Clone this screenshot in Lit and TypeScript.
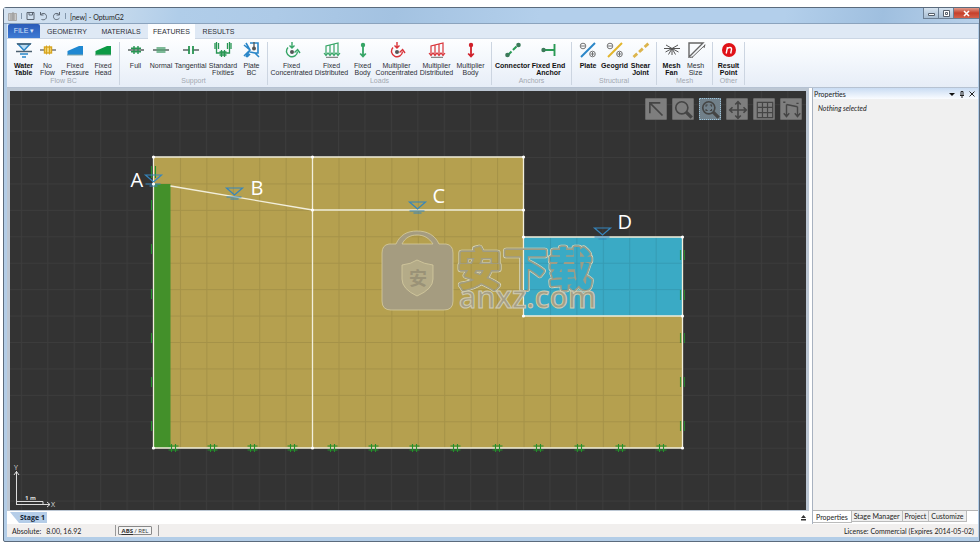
import { LitElement, html, svg, css, type TemplateResult, type SVGTemplateResult } from "lit";
import { customElement, property, state } from "lit/decorators.js";
import { classMap } from "lit/directives/class-map.js";
import { styleMap } from "lit/directives/style-map.js";

type Art = SVGTemplateResult;

/* Ribbon icons, drawn on a 20 x 16 grid */
const fixity = (inner: Art) => svg`<path d="M2 8H18" stroke="#4d5a55" stroke-width="1.4"/>${inner}`;
const concentrated = (c: string) => svg`
  <g fill="none" stroke=${c} stroke-width="1.4">
    <path d="M10 0V6M7.5 3.5L10 6L12.5 3.5"/>
    <path d="M6 5.5A5.5 5.5 0 1 0 15.5 9.5"/><path d="M12.5 10.5L15.6 7.5L18 11"/>
  </g><circle cx="10" cy="10" r="2" fill="#555"/>`;
const distributed = (c: string) => svg`
  <g fill="none" stroke=${c} stroke-width="1.2">
    <path d="M4 13V4L16 1V13M8 3V13M12 2V13"/>
    <path d="M2 11L4 13.5L6 11L8 13.5L10 11L12 13.5L14 11L16 13.5L18 11"/>
  </g><path d="M4 15.4H16" stroke="#888" stroke-width="1.3"/>`;
const body = (c: string) => svg`
  <circle cx="10" cy="3" r="2.2" fill=${c}/>
  <path d="M10 3V14M7.2 11.5L10 14.5L12.8 11.5" fill="none" stroke=${c} stroke-width="1.8"/>`;
const plate = (c: string) => svg`
  <path d="M3 15L17 1" stroke=${c} stroke-width="2"/>
  <g fill="none" stroke="#666" stroke-width=".9"><circle cx="5" cy="4" r="2.8"/><path d="M3 4H7"/>
  <circle cx="14.5" cy="12" r="2.8"/><path d="M12.5 12H16.5M14.5 10V14"/></g>`;

const icons: Record<string, Art> = {
  water: svg`<g fill="none" stroke="#2a86c8" stroke-width="1.5"><path d="M4 2H16L10 8.5Z" fill="#bcdcf2"/><path d="M6 12H14M8 15H12"/></g>
    <path d="M3 2H17M2 9.5H18" stroke="#4b6070" stroke-width="1.3"/>`,
  noflow: svg`<path d="M2 8H18" stroke="#777" stroke-width="1.5"/><rect x="6.5" y="5" width="7" height="6" fill="#f3d878" stroke="#d8a520" stroke-width="1.4"/>
    <path d="M8.5 3.5V12.5M11.5 3.5V12.5" stroke="#d8a520"/>`,
  pressure: svg`<path d="M2.5 13V9L14 4H18V13Z" fill="#1f88d2"/><path d="M2 13H18" stroke="#8aa"/>`,
  head: svg`<path d="M2.5 13V9L14 4H18V13Z" fill="#0c9a45"/><path d="M2 13H18" stroke="#8a9"/>`,
  full: fixity(svg`<path d="M8 4V12M12 4V12M5 6.2H15M5 9.8H15" stroke="#289653" stroke-width="1.4"/>`),
  normal: fixity(svg`<path d="M5.5 6H14.5M5.5 8H14.5M5.5 10H14.5" stroke="#55a577" stroke-width="1.6"/>`),
  tangential: fixity(svg`<path d="M8.5 8H11.5" stroke="#f5f9fd" stroke-width="2"/><path d="M8 4V12M12 4V12" stroke="#289653" stroke-width="1.8"/>`),
  standard: svg`<g fill="none" stroke="#289653" stroke-width="1.3"><path d="M3.5 0V11H16.5V0"/><path d="M2 1V7M5.5 1V7M14.5 1V7M18 1V7"/>
    <path d="M8.5 8V15M11.5 8V15M6.5 10H13.5M6.5 13H13.5"/></g>`,
  platebc: svg`<g fill="none" stroke="#2a86c8" stroke-width="1.6"><path d="M4 1L8 8L4 15M2 3L8 8M2 14L8 8M8 10L13 11L17 15M8 12L5 15M8 1H16V11H12"/></g>
    <path d="M12 0V7" stroke="#555" stroke-width="1.3"/><circle cx="12" cy="6.5" r="2" fill="#555"/>`,
  fconc: concentrated("#36a566"), fdist: distributed("#36a566"), fbody: body("#36a566"),
  mconc: concentrated("#d93238"), mdist: distributed("#d93238"), mbody: body("#d0202a"),
  connector: svg`<path d="M5 13L15 3" stroke="#2a9a55" stroke-width="2" stroke-dasharray="5 2"/><circle cx="4.5" cy="13" r="2.3" fill="#3c7a5a"/><circle cx="15.5" cy="3" r="2.3" fill="#3c7a5a"/>`,
  anchor: svg`<path d="M4 8H15M15.5 2V14" stroke="#2a9a55" stroke-width="1.9"/><circle cx="4.5" cy="8" r="2.2" fill="#3c7a5a"/>`,
  plate: plate("#2a86c8"), geogrid: plate("#e2b52c"),
  shear: svg`<path d="M2.5 15L18 1" stroke="#dcb44c" stroke-width="2.8" stroke-dasharray="5 2.5"/>`,
  fan: svg`<path d="M2 6.5H18M10 6.5V13M10 6.5L4 3M10 6.5L16 3M10 6.5L3.5 10M10 6.5L16.5 10M10 6.5L6.5 12.5M10 6.5L13.5 12.5" stroke="#555" stroke-width="1"/>`,
  mesh: svg`<path d="M3 1H17L3 15Z" fill="none" stroke="#666" stroke-width="1.4"/><path d="M6 15.5L19 3M3.5 15.5L7 15M18 6L19 2.5" fill="none" stroke="#666" stroke-width="1"/>`,
  result: svg`<circle cx="10" cy="8" r="7" fill="#e01218"/><path d="M7.2 11.5L8.5 5M8.2 7C9.5 4.8 13 5 12.5 7.5L11.7 11.5" fill="none" stroke="#fff" stroke-width="1.4"/>`,
};

interface Tool { icon: string; lines: string[]; width: number; bold?: boolean }
interface Group { name: string; width: number; tools: Tool[] }

const groups: Group[] = [
  { name: "Flow BC", width: 112, tools: [
    { icon: "water", lines: ["Water", "Table"], width: 24, bold: true },
    { icon: "noflow", lines: ["No", "Flow"], width: 24 },
    { icon: "pressure", lines: ["Fixed", "Pressure"], width: 31 },
    { icon: "head", lines: ["Fixed", "Head"], width: 25 }] },
  { name: "Support", width: 148, tools: [
    { icon: "full", lines: ["Full"], width: 23 },
    { icon: "normal", lines: ["Normal"], width: 28 },
    { icon: "tangential", lines: ["Tangential"], width: 31 },
    { icon: "standard", lines: ["Standard", "Fixities"], width: 34 },
    { icon: "platebc", lines: ["Plate", "BC"], width: 23 }] },
  { name: "Loads", width: 224, tools: [
    { icon: "fconc", lines: ["Fixed", "Concentrated"], width: 40 },
    { icon: "fdist", lines: ["Fixed", "Distributed"], width: 40 },
    { icon: "fbody", lines: ["Fixed", "Body"], width: 22 },
    { icon: "mconc", lines: ["Multiplier", "Concentrated"], width: 46 },
    { icon: "mdist", lines: ["Multiplier", "Distributed"], width: 34 },
    { icon: "mbody", lines: ["Multiplier", "Body"], width: 34 }] },
  { name: "Anchors", width: 80, tools: [
    { icon: "connector", lines: ["Connector"], width: 34, bold: true },
    { icon: "anchor", lines: ["Fixed End", "Anchor"], width: 38, bold: true }] },
  { name: "Structural", width: 85, tools: [
    { icon: "plate", lines: ["Plate"], width: 25, bold: true },
    { icon: "geogrid", lines: ["Geogrid"], width: 28, bold: true },
    { icon: "shear", lines: ["Shear", "Joint"], width: 24, bold: true }] },
  { name: "Mesh", width: 56, tools: [
    { icon: "fan", lines: ["Mesh", "Fan"], width: 22, bold: true },
    { icon: "mesh", lines: ["Mesh", "Size"], width: 26 }] },
  { name: "Other", width: 32, tools: [
    { icon: "result", lines: ["Result", "Point"], width: 26, bold: true }] },
];

@customElement("ribbon-bar")
class RibbonBar extends LitElement {
  static styles = css`
    :host { display: block; font-family: "Liberation Sans", Arial, sans-serif; font-size: 7px; color: #2c2f36; }
    button { font: inherit; color: inherit; border: 0; margin: 0; padding: 0; background: none; }
    .tabs { display: flex; height: 14px; padding-left: 1px; background: #dfe9f5; border-bottom: 1px solid #cbd6e4; }
    .file { width: 32px; color: #d5e2fa; background: linear-gradient(#2a5bb8, #3f7bd4); border-radius: 2px 2px 0 0; }
    .tab { width: 54px; height: 14px; }
    .tab.narrow { width: 47px; }
    .tab.active { height: 15px; padding-bottom: 1px; background: #fdfeff; }
    .groups { display: flex; height: 48px; padding-left: 1px; background: linear-gradient(#fdfeff, #f3f7fc 45%, #e6edf7); border-bottom: 1px solid #b6c2d2; }
    .group { box-sizing: border-box; flex: none; display: flex; flex-direction: column; justify-content: space-between;
      margin: 3px 0 2px; border-right: 1px solid #ccd5e1; }
    .tools { display: flex; justify-content: center; }
    .tool { flex: none; display: flex; flex-direction: column; align-items: center; line-height: 7px; white-space: nowrap; }
    .tool svg { width: 20px; height: 16px; margin-bottom: 4px; }
    .tool.bold { font-weight: bold; color: #111; }
    .name { text-align: center; line-height: 8px; color: #a3a8b0; }
  `;

  @state() private active = "FEATURES";

  render() {
    return html`
      <nav class="tabs">
        <button class="file">FILE ▾</button>
        ${["GEOMETRY", "MATERIALS", "FEATURES", "RESULTS"].map((t, i) => html`
          <button class=${classMap({ tab: true, narrow: i > 1, active: t === this.active })}
            @click=${() => { this.active = t; }}>${t}</button>`)}
      </nav>
      <div class="groups">
        ${groups.map((g) => html`
          <section class="group" style=${styleMap({ width: `${g.width}px` })}>
            <div class="tools">
              ${g.tools.map((t) => html`
                <button class=${classMap({ tool: true, bold: !!t.bold })} style=${styleMap({ width: `${t.width}px` })}>
                  <svg viewBox="0 0 20 16" aria-hidden="true">${icons[t.icon]}</svg>
                  ${t.lines.map((l) => html`<span>${l}</span>`)}
                </button>`)}
            </div>
            <div class="name">${g.name}</div>
          </section>`)}
      </div>`;
  }
}

const viewTools: { label: string; art: Art; active?: boolean }[] = [
  { label: "Select", art: svg`<path d="M4.5 14V4.5H14M4.5 4.5L16 16"/>` },
  { label: "Zoom", art: svg`<circle cx="9" cy="9" r="5.5"/><path d="M13 13L18 18" stroke-width="3"/>` },
  { label: "Zoom window", active: true, art: svg`<circle cx="9" cy="9" r="5.5"/><path d="M13 13L18 18" stroke-width="3"/><path d="M6.5 8V6.5H8M10 6.5H11.5V8M11.5 10V11.5H10M8 11.5H6.5V10" stroke-width="1"/>` },
  { label: "Pan", art: svg`<path d="M11 3.5V18.5M3.5 11H18.5M8.5 6L11 3.5L13.5 6M8.5 16L11 18.5L13.5 16M6 8.5L3.5 11L6 13.5M16 8.5L18.5 11L16 13.5"/>` },
  { label: "Grid", art: svg`<path d="M4 4H18V18H4ZM4 8.7H18M4 13.3H18M8.7 4V18M13.3 4V18" stroke-width="1.1"/>` },
  { label: "Snap", art: svg`<path d="M6 6V17M16 8V17M6 6L16 8M3.5 14L6 17L8.5 14M13.5 14L16 17L18.5 14M3 4H5M15 5H17" stroke-width="1.3"/>` },
];

const CELL = 26.43;
const nodes = [[0, 0], [159, 0], [370, 0], [370, 53], [159, 53], [0, 27], [370, 80], [529, 80], [370, 159], [529, 159], [529, 291], [159, 291], [0, 291]];
const rollers = [20, 59, 99, 139, 179, 220, 261, 302, 344, 385, 426, 467, 508];
const leftTicks = [48, 92, 137, 181, 225, 269];
const rightTicks = [98, 138, 181, 225, 269];
const labels: [string, number, number][] = [["A", -23, 30], ["B", 97, 38], ["C", 279, 46], ["D", 464, 72]];
const levels = [[0, 18], [81, 31], [264, 45], [449, 71]];

@customElement("model-canvas")
class ModelCanvas extends LitElement {
  static styles = css`
    :host { display: block; position: relative; background: #333; overflow: hidden; }
    .scene { display: block; width: 100%; height: 100%; }
    .label { font: 20px "Open Sans", "Noto Sans", sans-serif; fill: #fff; }
    .axis { font: 7px "Open Sans", sans-serif; fill: #ddd; }
    .axis.unit { font-weight: bold; font-size: 6px; }
    .cjk { font: 500 43px "Noto Sans CJK SC", sans-serif; stroke-linejoin: round; }
    .seal { font: 700 18px "Noto Sans CJK SC", sans-serif; fill: #9a9277; }
    .latin { font: 600 30px "Open Sans", sans-serif; fill: #a59f86; stroke: #d0ccb2; stroke-width: 1px; }
    .views { position: absolute; top: 7px; right: 4px; display: flex; gap: 5px; }
    .view { width: 22px; height: 22px; padding: 0; border: 1px solid #6a6a6a; border-radius: 1px; background: #7e7e7e; display: grid; place-items: center; }
    .view.active { background: #71808a; border: 1px dotted #9cc4dc; }
    .view svg { width: 22px; height: 22px; fill: none; stroke: #454545; stroke-width: 1.5px; }
  `;

  render() {
    return html`
      <svg class="scene" role="img" aria-label="Model">
        <defs>
          <pattern id="grid" width=${CELL} height=${CELL} patternUnits="userSpaceOnUse" x="143" y="66">
            <path d="M0 0H27M0 0V27" stroke="#3c3c3c" stroke-width="2" fill="none"/>
          </pattern>
          <pattern id="soil" width=${CELL} height=${CELL} patternUnits="userSpaceOnUse">
            <path d="M0 0H27M0 0V27" stroke="#000" stroke-opacity=".09" stroke-width="2" fill="none"/>
          </pattern>
          <text id="mark" class="cjk" x="305 351 396" y="194">安下载</text>
          <mask id="edge" maskUnits="userSpaceOnUse" x="433" y="140" width="170" height="80">
            <use href="#mark" x="143" fill="#fff" stroke="#fff" stroke-width="6.4"/><use href="#mark" x="143" fill="#000" stroke="#000" stroke-width="4.8"/>
          </mask>
          <mask id="band" maskUnits="userSpaceOnUse" x="433" y="140" width="170" height="80">
            <use href="#mark" x="143" fill="#fff" stroke="#fff" stroke-width="4.8"/><use href="#mark" x="143" fill="#000" stroke="#000" stroke-width="2.2"/>
          </mask>
        </defs>
        <rect width="100%" height="100%" fill="url(#grid)"/>
        <g transform="translate(143.5 66)">
          <path d="M0 0H370V159H529V291H0Z" fill="#b5a04f"/>
          <rect x="370" y="80" width="159" height="79" fill="#3aaac5"/>
          <path d="M0 0H370V80H529V291H0Z" fill="url(#soil)"/>
          <rect y="27" width="17" height="264" fill="#43902a"/>
          <path fill="none" stroke="#f2efdc" stroke-width="1.3" d="M0 0H370V80H529V291H0ZM159 0V291M370 80V159H529M17 29L159 53H370"/>
          <g stroke="#23902b" stroke-width="1.1" fill="none">
            ${rollers.map((x) => svg`<path d=${`M${x - 2} 287V295M${x + 2} 287V295M${x - 5} 289H${x + 5}M${x - 5} 293H${x + 5}`}/>`)}
            ${leftTicks.map((y) => svg`<path d=${`M-2 ${y - 5}V${y + 5}`}/>`)}
            ${rightTicks.map((y) => svg`<path d=${`M527 ${y - 5}v10m4 -10v10`} stroke-opacity=".8"/>`)}
            <path d="M-2 9V21M2 9V21"/>
          </g>
          <g fill="none" stroke="#3585bd" stroke-width="1.2">
            ${levels.map(([x, y]) => svg`<path d=${`M${x - 8} ${y}H${x + 8}L${x} ${y + 7}ZM${x - 8} ${y + 9}H${x + 7}M${x - 4} ${y + 11}H${x + 4}`}/>`)}
          </g>
          <g fill="#fff">${nodes.map(([x, y]) => svg`<circle cx=${x} cy=${y} r="1.6"/>`)}</g>
          ${labels.map(([t, x, y]) => svg`<text class="label" x=${x} y=${y}>${t}</text>`)}
        </g>
        <g fill="#a59c80" stroke="#d5cca0" stroke-width=".8">
          <path fill-rule="evenodd" d="M379 153H386C390 144 397 140 407 140S425 144 429 153H436Q443 154 443 162V210Q443 219 434 219H381Q372 219 372 210V162Q372 154 379 153ZM392 153H423C419 147 414 144 407 144S395 147 392 153Z"/>
          <path d="M392 174Q401 173 407 169Q414 173 423 174V188Q423 198 407 205Q392 198 392 188Z" fill="#b4ab88"/>
        </g>
        <text class="seal" x="399" y="194">安</text>
        <rect x="433" y="140" width="170" height="80" fill="#d5d4ba" mask="url(#edge)"/>
        <rect x="433" y="140" width="170" height="80" fill="#9f9c85" mask="url(#band)"/>
        <text class="latin" x="449" y="217">anxz.com</text>
        <path fill="none" stroke="#ddd" d="M6.5 413.5V380M4 384L6.5 380.5L9 384M6 413.5H40M37 411L40 413.5L37 416M6.5 410.5H33V413"/>
        <text class="axis" x="4" y="379">Y</text>
        <text class="axis" x="41" y="416">X</text>
        <text class="axis unit" x="15" y="409">1 m</text>
      </svg>
      <div class="views">
        ${viewTools.map((v) => html`<button class=${classMap({ view: true, active: !!v.active })} aria-label=${v.label}>
          <svg viewBox="1 1 20 20">${v.art}</svg></button>`)}
      </div>`;
  }
}

@customElement("side-panel")
class SidePanel extends LitElement {
  static styles = css`
    :host { display: flex; flex-direction: column; box-sizing: border-box; font-size: 7px; color: #222; border-left: 1px solid #a8b2c0; }
    .head { display: flex; align-items: center; height: 11px; padding: 0 3px 0 1px; gap: 4px; background: linear-gradient(#c9dcf3, #fafcff); }
    .title { flex: 1; margin: 0; font-size: 7px; font-weight: normal; }
    .mini { padding: 0; border: 0; background: none; width: 6px; height: 8px; }
    .mini svg { display: block; width: 6px; height: 8px; fill: none; stroke: #222; }
    .body { flex: 1; background: #f0f0f0; border-bottom: 1px solid #b5b5b5; padding: 4px 5px; font-style: italic; line-height: 10px; }
    .tabs { display: flex; height: 13px; background: #fff; }
    .tab { font: inherit; height: 11px; padding: 0 2px; border: 1px solid #bbb; border-width: 0 1px 1px 0; background: #efefef; color: inherit; white-space: nowrap; }
    .tab.active { background: #fff; height: 12px; padding: 0 3px; }
  `;

  @property() heading = "Properties";

  render() {
    return html`
      <header class="head"><h2 class="title">${this.heading}</h2>
        <button class="mini" aria-label="Menu"><svg viewBox="0 0 6 8"><path d="M0 3H6L3 6Z" fill="#111" stroke="none"/></svg></button>
        <button class="mini" aria-label="Pin"><svg viewBox="0 0 6 8"><path d="M2 1.5H4V5M2 1.5V5M1 5.5H5M3 5.5V8"/></svg></button>
        <button class="mini" aria-label="Close"><svg viewBox="0 0 6 8"><path d="M.5 1.5L5.5 6.5M5.5 1.5L.5 6.5"/></svg></button>
      </header>
      <div class="body">Nothing selected</div>
      <nav class="tabs">
        ${["Properties", "Stage Manager", "Project", "Customize"].map((t) => html`
          <button class=${classMap({ tab: true, active: t === this.heading })}>${t}</button>`)}
      </nav>`;
  }
}

@customElement("app-root")
class AppRoot extends LitElement {
  static styles = css`
    :host { display: flex; flex-direction: column; box-sizing: border-box; height: 100vh; padding: 7px 0 1px 3px;
      background: #fff; font-family: Lato, "Open Sans", sans-serif; font-size: 7px; color: #222; }
    .window { flex: 1; min-height: 0; display: flex; flex-direction: column; box-sizing: border-box; padding: 0 1px 4px 3px;
      border: 1px solid #5b6b7d; border-radius: 3px 0 0 2px; background: #b3cde7; }
    .title { display: flex; align-items: center; height: 15px; margin: 0 -1px 0 -3px; padding-left: 4px; gap: 4px;
      background: linear-gradient(100deg, #d5e3f1, #c3d8ec 12%, #b0cde9 18%, #adcae7 28%, #a3c2e1 40%, #b3cfeb 55%, #b3cfeb 80%, #9fbfdf 90%, #b9d1ea);
      border-bottom: 1px solid #8ba3bd; }
    .quick { padding: 0; border: 0; background: none; width: 9px; height: 10px; }
    .quick svg { display: block; width: 9px; height: 10px; fill: none; stroke: #5c6672; }
    .bar { width: 1px; height: 6px; background: #8296ab; }
    .caption { flex: 1; margin: 0; font-size: 7px; font-weight: normal; padding-top: 3px; }
    .controls { display: flex; align-self: flex-start; height: 11px; }
    .control { box-sizing: border-box; width: 15px; padding: 0; border: 1px solid #6c7f94; border-width: 0 0 1px 1px; background: linear-gradient(#d5e2ef, #a8bed4); display: grid; place-items: center; }
    .control svg { width: 7px; height: 7px; fill: #fff; stroke: #56606c; stroke-width: 1px; }
    .control.close { width: 26px; background: linear-gradient(#e19a8a, #c6402b 50%, #d4604a); }
    .main { flex: 1; min-height: 0; display: flex; background: #fff; }
    .work { flex: 1; min-width: 0; display: flex; flex-direction: column; margin-right: 3px; }
    .canvas { flex: 1; min-height: 0; border: 3px solid #bcc7d4; border-bottom-width: 1px; }
    .side { flex: none; width: 166px; }
    .stages { display: flex; justify-content: space-between; align-items: center; height: 13px; padding: 0 2px 0 3px; background: #fff; }
    .stage { width: 37px; height: 11px; padding: 0 0 0 8px; border: 0; font: bold 7px "Open Sans", sans-serif; color: #123;
      background: #b5cde8; clip-path: polygon(0 0, 100% 0, 100% 100%, 9px 100%); white-space: nowrap; }
    .eject { width: 7px; height: 8px; padding: 0; border: 0; background: none; }
    .eject svg { display: block; width: 7px; height: 8px; fill: #333; }
    .status { display: flex; align-items: center; height: 13px; padding: 0 4px 0 5px; background: #f1efee; }
    .position { width: 103px; display: flex; gap: 5px; }
    .rule { width: 1px; height: 11px; background: #999; margin-right: 2px; }
    .mode { width: 34px; height: 9px; margin-right: 6px; padding: 0; border: 1px solid #888; border-radius: 1px; background: #f4f4f4; font: 6px/6px "Open Sans", sans-serif; color: #333; }
    .mode b { text-decoration: underline; }
    .license { margin-left: auto; }
  `;

  private quick(label: string, art: Art): TemplateResult {
    return html`<button class="quick" aria-label=${label}><svg viewBox="0 0 9 10">${art}</svg></button>`;
  }

  render() {
    return html`
      <div class="window">
        <header class="title">
          ${this.quick("Application", svg`<path d="M.5 2.5H8.5V9.5H.5Z" fill="#c9c9c9" stroke="#aaa"/><path d="M2 4H7M2 6H7M2 8H7M5 1V9" stroke="#999"/>`)}
          <span class="bar"></span>
          ${this.quick("Save", svg`<path d="M1 1.5H8V8.5H1ZM3 1.5V4H6.5V1.5"/>`)}
          ${this.quick("Undo", svg`<path d="M1.5 1V4H4.5M1.5 4C3 1.5 7.5 2 7.5 5.5S4.5 9 2.5 8.5"/>`)}
          ${this.quick("Redo", svg`<path d="M7.5 1V4H4.5M7.5 4C6 1.5 1.5 2 1.5 5.5S5.5 9.5 7.5 7"/>`)}
          <span class="bar"></span>
          <h1 class="caption">[new] - OptumG2</h1>
          <div class="controls">
            <button class="control" aria-label="Minimize"><svg viewBox="0 0 7 7"><path d="M.5 3.5H6.5V5.5H.5Z"/></svg></button>
            <button class="control" aria-label="Maximize"><svg viewBox="0 0 7 7"><path d="M.5 .5H6.5V6.5H.5ZM2.5 2.5H4.5V4.5H2.5Z"/></svg></button>
            <button class="control close" aria-label="Close"><svg viewBox="0 0 7 7"><path d="M1 1L6 6M6 1L1 6" stroke="#fff" stroke-width="1.6"/></svg></button>
          </div>
        </header>
        <ribbon-bar></ribbon-bar>
        <div class="main">
          <div class="work">
            <model-canvas class="canvas"></model-canvas>
            <div class="stages">
              <button class="stage">Stage 1</button>
              <button class="eject" aria-label="Expand"><svg viewBox="0 0 7 8"><path d="M1 4H6L3.5 1ZM1 5H6V6.5H1Z"/></svg></button>
            </div>
          </div>
          <side-panel class="side"></side-panel>
        </div>
        <footer class="status">
          <span class="position"><span>Absolute:</span><span>8.00, 16.92</span></span>
          <span class="rule"></span>
          <button class="mode"><b>ABS</b> / REL</button>
          <span class="rule"></span>
          <span class="license">License: Commercial (Expires 2014-05-02)</span>
        </footer>
      </div>`;
  }
}
